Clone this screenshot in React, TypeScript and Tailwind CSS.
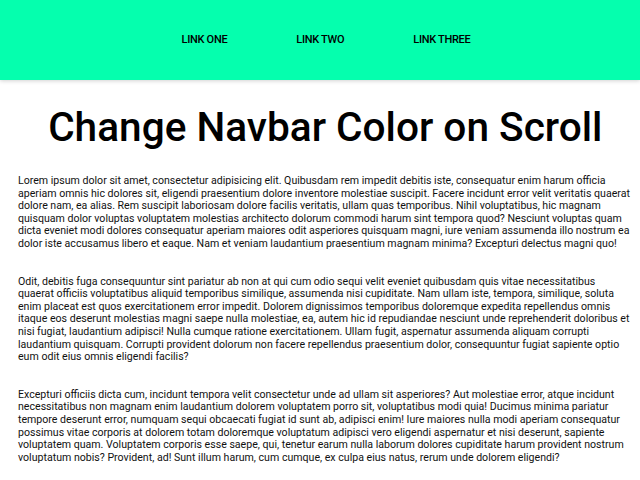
const paragraphs = [
  'Lorem ipsum dolor sit amet, consectetur adipisicing elit. Quibusdam rem impedit debitis iste, consequatur enim harum officia aperiam omnis hic dolores sit, eligendi praesentium dolore inventore molestiae suscipit. Facere incidunt error velit veritatis quaerat dolore nam, ea alias. Rem suscipit laboriosam dolore facilis veritatis, ullam quas temporibus. Nihil voluptatibus, hic magnam quisquam dolor voluptas voluptatem molestias architecto dolorum commodi harum sint tempora quod? Nesciunt voluptas quam dicta eveniet modi dolores consequatur aperiam maiores odit asperiores quisquam magni, iure veniam assumenda illo nostrum ea dolor iste accusamus libero et eaque. Nam et veniam laudantium praesentium magnam minima? Excepturi delectus magni quo!',
  'Odit, debitis fuga consequuntur sint pariatur ab non at qui cum odio sequi velit eveniet quibusdam quis vitae necessitatibus quaerat officiis voluptatibus aliquid temporibus similique, assumenda nisi cupiditate. Nam ullam iste, tempora, similique, soluta enim placeat est quos exercitationem error impedit. Dolorem dignissimos temporibus doloremque expedita repellendus omnis itaque eos deserunt molestias magni saepe nulla molestiae, ea, autem hic id repudiandae nesciunt unde reprehenderit doloribus et nisi fugiat, laudantium adipisci! Nulla cumque ratione exercitationem. Ullam fugit, aspernatur assumenda aliquam corrupti laudantium quisquam. Corrupti provident dolorum non facere repellendus praesentium dolor, consequuntur fugiat sapiente optio eum odit eius omnis eligendi facilis?',
  'Excepturi officiis dicta cum, incidunt tempora velit consectetur unde ad ullam sit asperiores? Aut molestiae error, atque incidunt necessitatibus non magnam enim laudantium dolorem voluptatem porro sit, voluptatibus modi quia! Ducimus minima pariatur tempore deserunt error, numquam sequi obcaecati fugiat id sunt ab, adipisci enim! Iure maiores nulla modi aperiam consequatur possimus vitae corporis at dolorem totam doloremque voluptatum adipisci vero eligendi aspernatur et nisi deserunt, sapiente voluptatem quam. Voluptatem corporis esse saepe, qui, tenetur earum nulla laborum dolores cupiditate harum provident nostrum voluptatum nobis? Provident, ad! Sunt illum harum, cum cumque, ex culpa eius natus, rerum unde dolorem eligendi?',
];

export default function App() {
  return (
    <div className="min-h-screen bg-white text-black font-['Roboto',sans-serif]">
      {/* Navbar */}
      <nav className="h-[80px] bg-[#05ffae] shadow-[0_1px_4px_rgba(0,0,0,0.18)] flex items-center justify-center gap-[69px] pl-[12px]">
        <a className="text-[11px] font-medium tracking-[-0.3px] text-black">LINK ONE</a>
        <a className="text-[11px] font-medium tracking-[-0.3px] text-black">LINK TWO</a>
        <a className="text-[11px] font-medium tracking-[-0.3px] text-black">LINK THREE</a>
      </nav>

      <main className="pl-[18px] pr-[7.5px]">
        <h1 className="text-[40.6px] leading-[48px] font-medium text-center mt-[23px]">Change Navbar Color on Scroll</h1>
        <div className="mt-[24px] flex flex-col gap-[25px]">
          {paragraphs.map((p, i) => (
            <p key={i} className="text-[10.6px] leading-[12.6px] text-[#111]">{p}</p>
          ))}
        </div>
      </main>
    </div>
  );
}
